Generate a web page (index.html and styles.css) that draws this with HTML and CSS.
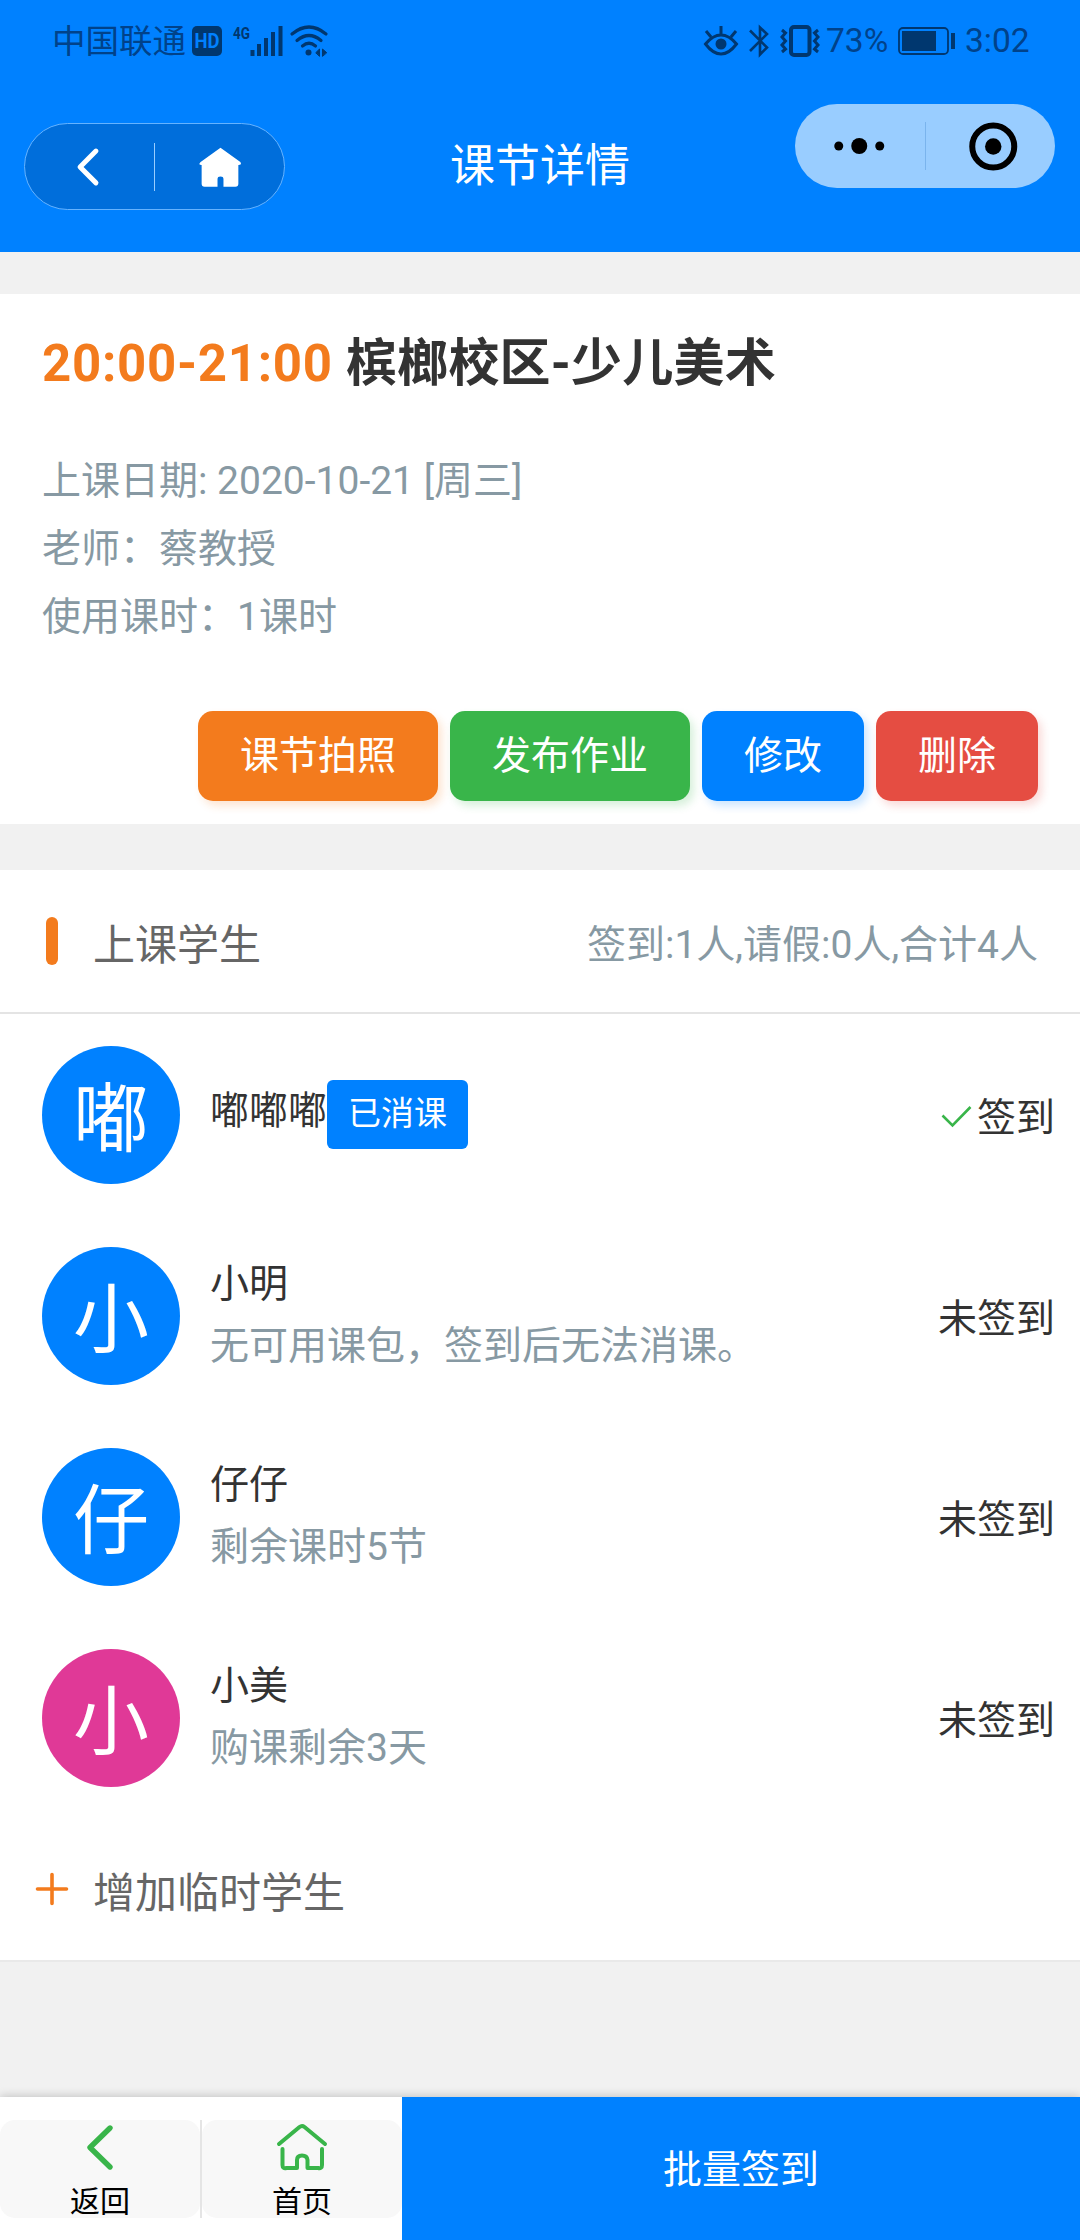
FILE: index.html
```html
<!DOCTYPE html>
<html lang="zh-CN">
<head>
<meta charset="utf-8">
<title>课节详情</title>
<link rel="stylesheet" href="styles.css">
</head>
<body>
<div class="page">
  <header class="header">
    <div class="status">
      <div class="status-side">
        <span class="carrier">中国联通</span>
        <svg class="ic-hd" width="30" height="30" viewBox="0 0 30 30"><rect width="30" height="30" rx="5" fill="#00376f"/><text x="2.5" y="22" textLength="25" lengthAdjust="spacingAndGlyphs" class="hd-text">HD</text></svg>
        <svg class="ic-signal" width="50" height="40" viewBox="0 -4 50 40"><text x="0" y="14" textLength="17" lengthAdjust="spacingAndGlyphs" class="net-text">4G</text><path d="M19.5 31v-6M26 31V19M33 31V13M40 31V7M47.500 31V1" stroke="#00376f" stroke-width="4"/></svg>
        <svg class="ic-wifi" width="38" height="32" viewBox="0 0 38 32" fill="none" stroke="#00376f" stroke-width="3.200" stroke-linecap="round"><path d="M2 9Q19-5 36 9M7 15.500Q19 5.500 31 15.500M12.500 21Q19 15.500 25.500 21"/><circle cx="18.500" cy="27.500" r="3" fill="#00376f" stroke="none"/><path d="M26 27.500l3.500-3.500v7zM36.500 27.500l-4-3.500v7z" fill="#00376f" stroke-width="1"/></svg>
      </div>
      <div class="status-side">
        <svg width="34" height="32" viewBox="0 0 34 32" fill="none" stroke="#00376f" stroke-width="3"><path d="M1.500 19Q9 10 17 10T32.500 19Q25 29 17 29T1.500 19ZM17 9V1M7 12L2 6M27 12l5-6"/><circle cx="17" cy="19" r="5.500" fill="#00376f" stroke="none"/></svg>
        <svg class="ic-bt" width="20" height="32" viewBox="0 0 20 32" fill="none" stroke="#00376f" stroke-width="2.600"><path d="M1 5.500L18 22.500L11 29.500V2.500L18 9L1 26"/></svg>
        <svg class="ic-vibrate" width="40" height="32" viewBox="0 0 40 32" fill="none" stroke="#00376f"><rect x="11" y="2" width="18.500" height="28" rx="3" stroke-width="4"/><path d="M2 5l3.500 3-3.500 4 3.500 4-3.500 4 3.500 4-3.500 3M38 5l-3.500 3 3.500 4-3.500 4 3.500 4-3.500 4 3.500 3" stroke-width="3"/></svg>
        <span class="percent">73%</span>
        <svg class="ic-battery" width="58" height="28" viewBox="0 0 58 28"><rect x="1" y="1" width="49" height="26" rx="4" fill="none" stroke="#00376f" stroke-width="1.800"/><path d="M4 4h34v20H4zM53 6h4v16h-4z" fill="#00376f"/></svg>
        <span class="clock">3:02</span>
      </div>
    </div>
    <nav class="nav">
      <div class="capsule capsule-left">
        <svg width="130" height="85" viewBox="0 0 130 85"><path d="M71.500 27L55.500 43L71.500 59" fill="none" stroke="#fff" stroke-width="5" stroke-linecap="round" stroke-linejoin="round"/></svg>
        <i class="split split-light"></i>
        <svg width="130" height="85" viewBox="0 0 130 85"><path d="M66 23.500L86 38Q88 41 84 41V60Q84 63 81 63H69V55Q69 52.500 66 52.500T63 55V63H50Q47 63 47 60V41Q43 41 46 38Z" fill="#fff"/></svg>
      </div>
      <h1 class="nav-title">课节详情</h1>
      <div class="capsule capsule-right">
        <svg width="129" height="84" viewBox="0 0 129 84"><circle cx="43.500" cy="42" r="4.500"/><circle cx="64" cy="42" r="8"/><circle cx="84.500" cy="42" r="4.500"/></svg>
        <i class="split split-dark"></i>
        <svg width="129" height="84" viewBox="0 0 129 84"><circle cx="67" cy="42.500" r="21" fill="none" stroke="#000" stroke-width="6"/><circle cx="67" cy="42.500" r="8.200"/></svg>
      </div>
    </nav>
  </header>

  <section class="lesson">
    <h2 class="lesson-title"><span class="lesson-time">20:00-21:00 </span>槟榔校区-少儿美术</h2>
    <div class="lesson-info">
      <p>上课日期: 2020-10-21 [周三]</p>
      <p>老师：蔡教授</p>
      <p>使用课时：1课时</p>
    </div>
    <div class="actions">
      <button class="btn btn-orange">课节拍照</button>
      <button class="btn btn-green">发布作业</button>
      <button class="btn btn-blue">修改</button>
      <button class="btn btn-red">删除</button>
    </div>
  </section>

  <section class="students">
    <div class="students-head">
      <i class="marker"></i>
      <h3 class="students-title">上课学生</h3>
      <span class="students-stat">签到:1人,请假:0人,合计4人</span>
    </div>
    <ul class="list">
      <li class="row">
        <span class="avatar">嘟</span>
        <div class="who"><div class="name name-tagged"><span class="tagged-text">嘟嘟嘟</span><span class="tag">已消课</span></div></div>
        <span class="state"><svg class="check" width="31" height="24" viewBox="0 0 31 24"><path d="M1.500 11.500L11.500 21.500L29.500 3" fill="none" stroke="#39b54a" stroke-width="2.600"/></svg>签到</span>
      </li>
      <li class="row">
        <span class="avatar">小</span>
        <div class="who"><div class="name">小明</div><div class="note">无可用课包，签到后无法消课。</div></div>
        <span class="state">未签到</span>
      </li>
      <li class="row">
        <span class="avatar">仔</span>
        <div class="who"><div class="name">仔仔</div><div class="note">剩余课时5节</div></div>
        <span class="state">未签到</span>
      </li>
      <li class="row">
        <span class="avatar avatar-pink">小</span>
        <div class="who"><div class="name">小美</div><div class="note">购课剩余3天</div></div>
        <span class="state">未签到</span>
      </li>
    </ul>
    <div class="add">
      <svg width="32" height="32" viewBox="0 0 32 32"><path d="M1.500 16H30.500M16 1.500V30.500" stroke="#f37b1d" stroke-width="3.600" stroke-linecap="round"/></svg>
      <span>增加临时学生</span>
    </div>
  </section>

  <footer class="footer">
    <a class="tab">
      <svg width="50" height="50" viewBox="0 0 50 50"><path d="M35 8L15 27.500L35 47" fill="none" stroke="#39b54a" stroke-width="5.400" stroke-linecap="round" stroke-linejoin="round"/></svg>
      <span>返回</span>
    </a>
    <i class="tab-split"></i>
    <a class="tab">
      <svg width="50" height="50" viewBox="0 0 50 50" fill="none" stroke="#39b54a" stroke-width="4" stroke-linecap="round" stroke-linejoin="round"><path d="M2 24L22.500 7Q25 5 27.500 7L48 24M5.500 29V45Q5.500 49 9.500 48H20V40Q20 35.500 25 35.500T30.500 40V48H41Q45 49 45 45V29"/></svg>
      <span>首页</span>
    </a>
    <button class="batch">批量签到</button>
  </footer>
</div>
</body>
</html>
```

FILE: styles.css
```css
* { box-sizing: border-box; margin: 0; padding: 0; }

body {
  width: 1080px;
  background: #f1f1f1;
  color: #333;
  font-family: Roboto, "Noto Sans CJK SC", sans-serif;
  font-size: 39px;
}

svg { display: block; flex: none; overflow: visible; }
button { border: 0; font: inherit; color: #fff; }
h1, h2, h3 { font-weight: 400; }

.page { display: flex; flex-direction: column; height: 2240px; overflow: hidden; }

/* Header */
.header { height: 252px; background: #0081ff; }
.status { display: flex; justify-content: space-between; height: 82px; padding: 0 50px 0 52px; color: #00428a; }
.status-side { display: flex; align-items: center; }
.carrier { padding-top: 2px; font-size: 33.500px; line-height: 40px; }
.ic-hd { margin-left: 6px; }
.hd-text { font: 700 20px Roboto, sans-serif; fill: #0081ff; }
.ic-signal { margin-left: 11px; }
.net-text { font: 700 17px Roboto, sans-serif; fill: #00376f; }
.ic-wifi { margin-left: 7px; }
.ic-bt { margin-left: 11px; }
.ic-vibrate { margin-left: 11px; }
.percent, .clock { font-size: 33.500px; line-height: 40px; }
.percent { width: 63px; margin-left: 6px; white-space: nowrap; }
.ic-battery { margin-left: 9px; }
.clock { width: 64px; margin-left: 9px; margin-right: 1px; white-space: nowrap; }

.nav { display: grid; grid-template-columns: 261px 1fr 260px; align-items: start; padding: 22px 25px 0 24px; }
.capsule { display: flex; align-items: center; border-radius: 44px; overflow: hidden; }
.capsule-left { height: 87px; margin-top: 19px; background: #006edb; border: 1px solid #66b3ff; }
.capsule-right { height: 84px; background: #99cdff; }
.capsule svg { flex: 1 1 0; min-width: 0; }
.split { width: 1px; height: 48px; }
.split-light { background: #99cdff; }
.split-dark { background: #7ab4ed; }
.nav-title { margin-top: 33px; color: #fff; font-size: 45px; line-height: 60px; text-align: center; }

/* Lesson summary */
.lesson { height: 530px; margin-top: 42px; padding: 36px 42px 0; background: #fff; }
.lesson-title { font-size: 51px; font-weight: 700; line-height: 68px; letter-spacing: .2px; }
.lesson-time { color: #f37b1d; letter-spacing: .7px; }
.lesson-info { margin-top: 49px; color: #8799a3; line-height: 68px; }
.actions { display: flex; justify-content: flex-end; gap: 12px; margin-top: 60px; }
.btn { height: 90px; padding: 0 42px; border-radius: 15px; line-height: 90px; }
.btn-orange { background: #f37b1d; box-shadow: 4px 5px 9px rgba(243, 123, 29, .2); }
.btn-green { background: #39b54a; box-shadow: 4px 5px 9px rgba(57, 181, 74, .2); }
.btn-blue { background: #0081ff; box-shadow: 4px 5px 9px rgba(0, 129, 255, .2); }
.btn-red { background: #e54d42; box-shadow: 4px 5px 9px rgba(229, 77, 66, .2); }

/* Students */
.students { margin-top: 46px; background: #fff; border-bottom: 2px solid #e9e9e9; }
.students-head { display: flex; align-items: center; height: 144px; padding: 0 42px 0 46px; border-bottom: 2px solid #e4e4e4; }
.marker { width: 12px; height: 48px; border-radius: 6px; background: #f37b1d; }
.students-title { margin-left: 35px; color: #666; font-size: 42px; }
.students-stat { margin-left: auto; color: #8799a3; }
.list { list-style: none; }
.row { display: flex; align-items: center; height: 201px; padding: 0 25px 0 42px; }
.avatar { width: 138px; height: 138px; padding-top: 5px; border-radius: 50%; background: #0081ff; color: #fff; font-size: 76px; line-height: 138px; text-align: center; }
.avatar-pink { background: #e03997; }
.who { flex: 1; margin-left: 30px; }
.name { line-height: 61px; }
.name-tagged { display: flex; align-items: center; }
.tagged-text { padding-bottom: 6px; }
.tag { height: 69px; padding: 0 21px; border-radius: 6px; background: #0081ff; color: #fff; font-size: 33px; line-height: 68px; }
.note { color: #8799a3; line-height: 63px; }
.state { display: flex; align-items: center; padding-bottom: 2px; }
.check { margin: 4px 5px 0 0; }
.add { display: flex; align-items: center; gap: 25px; height: 142px; padding-left: 36px; color: #666; font-size: 42px; }
.add span { padding-top: 1px; }

/* Bottom bar */
.footer { display: flex; align-items: flex-start; height: 143px; margin-top: auto; background: #fff; box-shadow: 0 -1px 9px rgba(0, 0, 0, .2); }
.tab { display: flex; flex-direction: column; align-items: center; width: 200px; height: 98px; margin-top: 23px; border-radius: 15px; background: #f8f8f8; color: #000; font-size: 30px; line-height: 40px; }
.tab span { margin-top: 12px; }
.tab-split { width: 2px; height: 98px; margin-top: 23px; background: #e5e5e5; }
.batch { flex: 1; height: 143px; padding-top: 3px; background: #0081ff; line-height: 140px; }
```
